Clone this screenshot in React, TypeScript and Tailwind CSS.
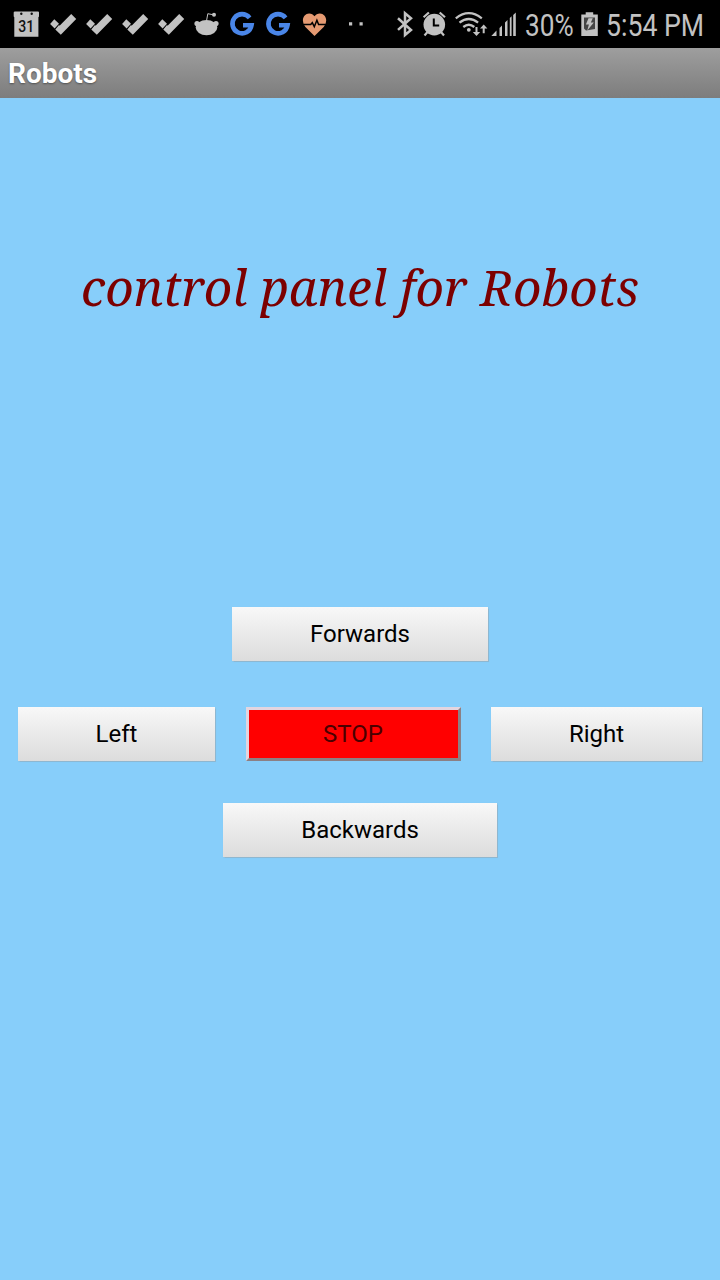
import type { ReactNode } from 'react';

const GREY = '#c2c2c2';

function Glyph({ box, className, children }: { box: string; className: string; children: ReactNode }) {
  return (
    <svg viewBox={box} className={`h-12 shrink-0 ${className}`} fill={GREY} aria-hidden="true">
      {children}
    </svg>
  );
}

function CheckGlyph() {
  return (
    <Glyph box="46 0 36 48" className="w-9">
      <path d="M54.3 19.200l4.700 4.600-4.400 4.800-4.500-4.500z" />
      <path d="M71.200 14l5 4.900-15.400 15.900-5.500-5.400 3.500-4.100 1 .2z" />
    </Glyph>
  );
}

function GoogleGlyph() {
  return (
    <Glyph box="226 0 36 48" className="w-9">
      <path d="M249.600 17.800A9.600 9.600 0 1 0 251.500 25.300H243" fill="none" stroke="#4a86e8" strokeWidth="4.600" />
    </Glyph>
  );
}

function StatusBar() {
  return (
    <header className="flex h-12 w-full shrink-0 overflow-hidden bg-black font-[Roboto,sans-serif] text-[#c2c2c2]">
      <Glyph box="0 0 46 48" className="w-[46px]">
        <path d="M15 11.500H38q1 0 1 1v4l-.6.700V36.700H14.300V17.200l-.6-.7v-4q0-1 1.300-1z" />
        <circle cx="21.300" cy="13.800" r="1.200" fill="#111" />
        <circle cx="31.700" cy="13.800" r="1.200" fill="#111" />
        <text x="26.200" y="32.100" textAnchor="middle" fontSize="16.500" fontWeight="500" fill="#111" textLength="16" lengthAdjust="spacingAndGlyphs">31</text>
      </Glyph>
      <CheckGlyph />
      <CheckGlyph />
      <CheckGlyph />
      <CheckGlyph />
      <Glyph box="190 0 36 48" className="w-9">
        <ellipse cx="206.500" cy="27.600" rx="10.800" ry="7.700" />
        <circle cx="197" cy="23.600" r="2.600" />
        <circle cx="216" cy="23.600" r="2.600" />
        <circle cx="214" cy="14.700" r="2" />
        <path d="M206.500 21l1.300-7.300 5 1" fill="none" stroke={GREY} strokeWidth="1" />
      </Glyph>
      <GoogleGlyph />
      <GoogleGlyph />
      <Glyph box="298 0 40 48" className="w-10">
        <path fill="#e59a72" d="M314.500 36l-9.100-9q-2.500-2.800-2.500-6.500c0-4 2.800-7 6.200-7 2.400 0 4.200 1.100 5.400 2.800 1.200-1.700 3-2.800 5.400-2.800 3.500 0 6.300 3 6.300 7q0 3.700-2.500 6.500z" />
        <path d="M303 24.500h7.700l1.600-1.800 2 4 2.600-6.500 1.700 4.300H326" fill="none" stroke="#000" strokeWidth="1.500" />
      </Glyph>
      <Glyph box="338 0 54 48" className="w-[54px]">
        <path d="M349 22.300h3.200v3.200H349zM359.500 22.300h3.200v3.200h-3.200z" />
      </Glyph>
      <Glyph box="392 0 28 48" className="w-7">
        <path d="M398 18.300l13 11.700-6 5V13.200l6 5-13 11.700" fill="none" stroke={GREY} strokeWidth="2.500" />
      </Glyph>
      <Glyph box="420 0 32 48" className="w-8">
        <circle cx="434.300" cy="24.600" r="10.800" />
        <path d="M423.600 17.200l5.300-4.700M445 17.200l-5.300-4.700M427.500 32l-3 3.500M441 32l3 3.500" fill="none" stroke={GREY} strokeWidth="2.200" />
        <path d="M433.800 18.500v7h5.400" fill="none" stroke="#000" strokeWidth="2" />
      </Glyph>
      <Glyph box="452 0 38 48" className="w-[38px]">
        <path d="M455.800 18.300q13-10.300 26 0M459.500 22.700q9.300-7.500 18.600 0M463.300 27q5.500-4.500 11 0" fill="none" stroke={GREY} strokeWidth="2.300" />
        <circle cx="468.800" cy="29.800" r="1.900" />
        <path d="M475.500 27h2v5h2.700l-3.700 4-3.700-4h2.700zM482.700 33.300v-4.800H480l3.700-4 3.700 4h-2.700v4.800z" />
      </Glyph>
      <Glyph box="490 0 35 48" className="w-[35px]">
        <path d="M491.300 36l5.200-5.500V36zM499.500 28l2.500-2.500V36h-2.500zM505 22.500l2.500-2.500V36H505zM509.800 18l1.800-1.700V36h-1.800zM513.200 15l2.600-2.600V36h-2.600z" />
      </Glyph>
      <span className="mt-2 w-[54px] shrink-0 origin-left scale-x-[0.845] whitespace-nowrap text-[31px] leading-9">30%</span>
      <Glyph box="579 0 27 48" className="w-[27px]">
        <path d="M585.700 12.200h7.500v2.200h4.600V36h-16.500V14.400h4.400z" />
        <path d="M584 17.500h11v11.500l-9 1.500-2-2z" fill="#454545" />
        <path d="M588.500 18.200h4.300l-2 4.300h3l-6.500 8 1.600-6h-3z" />
      </Glyph>
      <span className="mt-2 shrink-0 origin-left scale-x-[0.860] whitespace-nowrap text-[31px] leading-9">5:54 PM</span>
    </header>
  );
}

function PadButton({ className, children }: { className: string; children: ReactNode }) {
  return (
    <button
      className={`flex h-[54px] shrink-0 items-center justify-center bg-linear-to-b from-[#f8f8f8] to-[#dcdcdc] text-2xl leading-7 text-black shadow-[0_0_1px_0.5px_rgba(150,160,165,0.5)] ${className}`}
    >
      {children}
    </button>
  );
}

export default function App() {
  return (
    <div className="flex h-[1280px] w-[720px] flex-col overflow-hidden bg-[#87cefa] font-[Roboto,sans-serif]">
      <StatusBar />
      <div className="flex h-[50px] shrink-0 items-center bg-linear-to-b from-[#9e9e9e] to-[#7d7d7d] pt-0.5 pl-2">
        <h1 className="text-[28px] leading-none font-bold text-white [text-shadow:0_1px_2px_rgba(0,0,0,0.4)]">Robots</h1>
      </div>
      <main className="flex flex-col items-center">
        <div className="mt-[153px] flex h-[72px] items-center justify-center">
          <h2 className="font-['Noto_Serif','Droid_Serif','DejaVu_Serif_Condensed','DejaVu_Serif',serif] text-[49.600px] leading-[72px] whitespace-nowrap text-[#7c0000] italic">
            control panel for Robots
          </h2>
        </div>
        <PadButton className="mt-[284px] w-[256px]">Forwards</PadButton>
        <div className="mt-[46px] flex w-[684px] items-center justify-between">
          <PadButton className="w-[197px]">Left</PadButton>
          <button className="flex h-[54px] w-[215px] items-center justify-center border-[3px] border-t-[#e3d5df] border-r-[#8c8084] border-b-[#8c8084] border-l-[#e3d5df] bg-[#ff0000] text-2xl leading-7 text-[#4a0000]">
            STOP
          </button>
          <PadButton className="w-[211px]">Right</PadButton>
        </div>
        <PadButton className="mt-[42px] w-[274px]">Backwards</PadButton>
      </main>
    </div>
  );
}
